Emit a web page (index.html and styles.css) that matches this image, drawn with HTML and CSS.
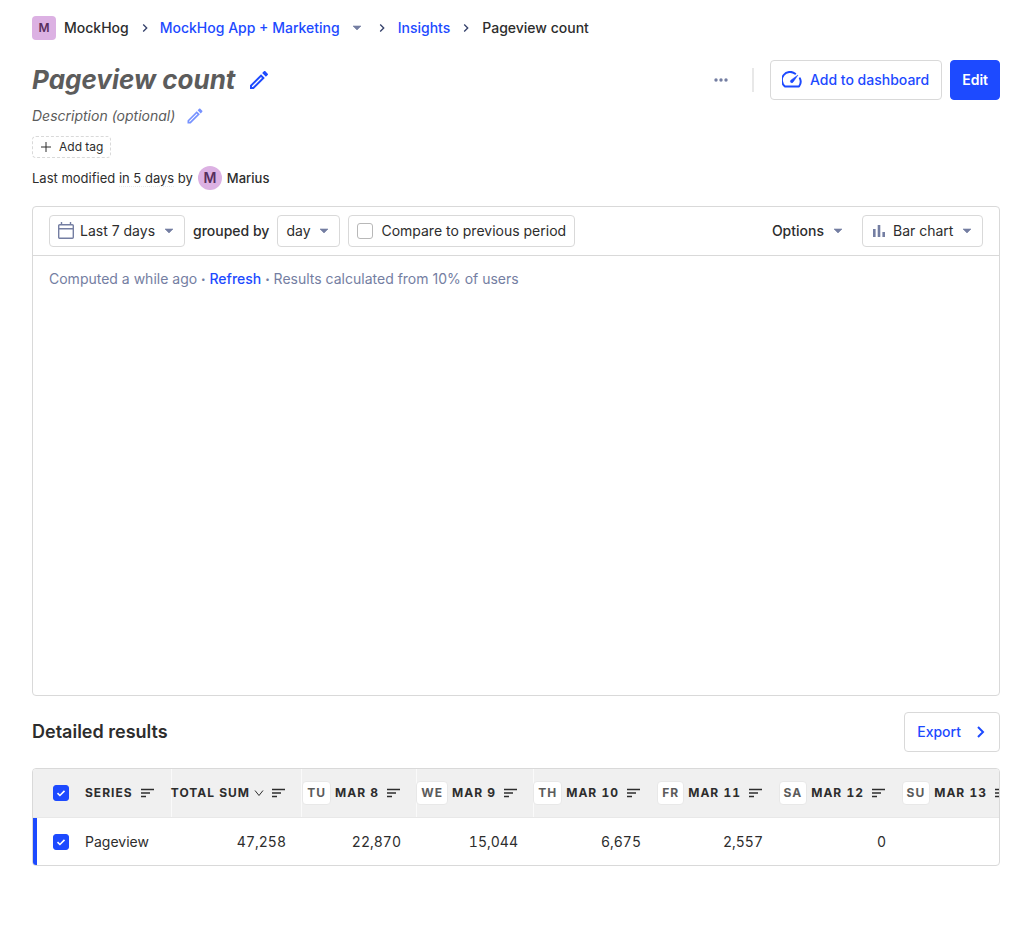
FILE: index.html
```html
<!DOCTYPE html>
<html lang="en">
<head>
<meta charset="utf-8">
<meta name="viewport" content="width=device-width, initial-scale=1">
<title>Pageview count • MockHog</title>
<link rel="stylesheet" href="styles.css">
</head>
<body>
<svg class="sprite" aria-hidden="true">
  <symbol id="chevron" viewBox="0 0 24 24"><path d="M8.6 16.6 13.2 12 8.6 7.4 10 6l6 6-6 6z" fill="currentColor"/></symbol>
  <symbol id="caret" viewBox="0 0 10 6"><path d="M1 1h8L5 5z" fill="currentColor" stroke="currentColor" stroke-width=".6" stroke-linejoin="round"/></symbol>
  <symbol id="pencil" viewBox="0 0 24 24"><path fill="currentColor" d="M14.06 9.02l.92.92L5.92 19H5v-.92l9.06-9.06M17.66 3c-.25 0-.51.1-.7.29l-1.83 1.83 3.75 3.75 1.83-1.83c.39-.39.39-1.02 0-1.41l-2.34-2.34c-.2-.2-.45-.29-.71-.29zm-3.6 3.19L3 17.25V21h3.75L17.81 9.94l-3.75-3.75z"/></symbol>
  <symbol id="sort" viewBox="0 0 14 10"><path d="M0 1.5h13M0 5h9M0 8.5h5" stroke="currentColor" stroke-width="1.3"/></symbol>
</svg>

<main class="page">
  <nav class="breadcrumbs" aria-label="Breadcrumb">
    <span class="lettermark">M</span>
    <span class="crumb-org">MockHog</span>
    <svg class="crumb-sep"><use href="#chevron"/></svg>
    <a href="#project">MockHog App + Marketing</a>
    <button class="crumb-switch" aria-label="Switch project"><svg class="caret"><use href="#caret"/></svg></button>
    <svg class="crumb-sep"><use href="#chevron"/></svg>
    <a href="#insights">Insights</a>
    <svg class="crumb-sep"><use href="#chevron"/></svg>
    <span>Pageview count</span>
  </nav>

  <header class="page-header">
    <div class="title-row">
      <h1>Pageview count</h1>
      <button class="icon-button" aria-label="Edit name"><svg class="pencil-large"><use href="#pencil"/></svg></button>
    </div>
    <div class="actions">
      <button class="icon-button more" aria-label="More actions"><svg viewBox="0 0 14 4" fill="currentColor"><circle cx="2" cy="2" r="1.7"/><circle cx="7" cy="2" r="1.7"/><circle cx="12" cy="2" r="1.7"/></svg></button>
      <span class="divider"></span>
      <button class="button add-dashboard">
        <svg viewBox="0 0 20 18" fill="none" stroke="currentColor" stroke-width="2" stroke-linecap="round" stroke-linejoin="round"><path d="M13.2 2.7A8 8 0 0 0 3 15.5h14a8 8 0 0 0 .9-8.2"/><path d="M8.8 11.2a1.4 1.4 0 0 1 0-2L16 4l-5 7.2a1.5 1.5 0 0 1-2.2 0z" fill="currentColor" stroke-width=".5"/></svg>
        Add to dashboard
      </button>
      <button class="button primary">Edit</button>
    </div>
  </header>

  <div class="description">
    <span>Description (optional)</span>
    <button class="icon-button faded" aria-label="Edit description"><svg class="pencil-small"><use href="#pencil"/></svg></button>
  </div>
  <button class="add-tag"><svg viewBox="0 0 10 10" fill="none" stroke="currentColor"><path d="M5 0v10M0 5h10"/></svg>Add tag</button>
  <div class="modified">
    <span>Last modified <span class="time">in 5 days</span> by</span>
    <span class="lettermark round">M</span>
    <span class="author">Marius</span>
  </div>

  <section class="insight">
    <div class="toolbar">
      <div class="filters">
        <label class="picker date">
          <svg class="lead calendar" viewBox="0 0 16 17" fill="none" stroke="currentColor" stroke-width="1.4"><path d="M1.7 2.7h12.6a1 1 0 0 1 1 1v11.6a1 1 0 0 1-1 1H1.7a1 1 0 0 1-1-1V3.700a1 1 0 0 1 1-1zM.7 6.700h14.6M3.500 0v3M12.500 0v3"/></svg>
          <select aria-label="Date range"><option>Last 7 days</option></select>
          <svg class="caret"><use href="#caret"/></svg>
        </label>
        <label class="filter-label" for="interval">grouped by</label>
        <span class="picker">
          <select id="interval"><option>day</option></select>
          <svg class="caret"><use href="#caret"/></svg>
        </span>
        <label class="compare"><input type="checkbox" class="box">Compare to previous period</label>
      </div>
      <div class="display">
        <button class="options" aria-haspopup="menu">Options<svg class="caret"><use href="#caret"/></svg></button>
        <label class="picker chart">
          <svg class="lead bars" viewBox="0 0 12 12" fill="currentColor"><path d="M0 4h2.6v8H0zM4.7 0h2.6v12H4.7zM9.4 7H12v5H9.4z"/></svg>
          <select aria-label="Chart type"><option>Bar chart</option></select>
          <svg class="caret"><use href="#caret"/></svg>
        </label>
      </div>
    </div>
    <div class="canvas">
      <p class="status">Computed a while ago <span class="dot">•</span> <a href="#refresh">Refresh</a> <span class="dot">•</span> Results calculated from 10% of users</p>
    </div>
  </section>

  <div class="results-header">
    <h2>Detailed results</h2>
    <button class="button export">Export<svg viewBox="0 0 8 12" fill="none" stroke="currentColor" stroke-width="2"><path d="M1 1l5 5-5 5"/></svg></button>
  </div>

  <div class="results">
    <table>
      <colgroup><col class="c-series"><col class="c-total"><col class="c-tu"><col class="c-we"><col class="c-th"><col class="c-fr"><col class="c-sa"><col class="c-su"></colgroup>
      <thead>
        <tr>
          <th scope="col"><div class="cell start"><input type="checkbox" class="box" checked aria-label="Select all series"><span>Series</span><svg class="sort"><use href="#sort"/></svg></div></th>
          <th scope="col"><div class="cell"><span>Total sum</span><svg class="down" viewBox="0 0 10 7" fill="none" stroke="currentColor"><path d="M1 .5l4 5 4-5"/></svg><svg class="sort"><use href="#sort"/></svg></div></th>
          <th scope="col"><div class="cell"><span class="weekday">Tu</span><span>Mar 8</span><svg class="sort"><use href="#sort"/></svg></div></th>
          <th scope="col"><div class="cell"><span class="weekday">We</span><span>Mar 9</span><svg class="sort"><use href="#sort"/></svg></div></th>
          <th scope="col"><div class="cell"><span class="weekday">Th</span><span>Mar 10</span><svg class="sort"><use href="#sort"/></svg></div></th>
          <th scope="col"><div class="cell"><span class="weekday">Fr</span><span>Mar 11</span><svg class="sort"><use href="#sort"/></svg></div></th>
          <th scope="col"><div class="cell"><span class="weekday">Sa</span><span>Mar 12</span><svg class="sort"><use href="#sort"/></svg></div></th>
          <th scope="col"><div class="cell"><span class="weekday">Su</span><span>Mar 13</span><svg class="sort"><use href="#sort"/></svg></div></th>
        </tr>
      </thead>
      <tbody>
        <tr>
          <td class="series"><label class="cell start"><input type="checkbox" class="box" checked><span>Pageview</span></label></td>
          <td>47,258</td><td>22,870</td><td>15,044</td><td>6,675</td><td>2,557</td><td>0</td><td></td>
        </tr>
      </tbody>
    </table>
  </div>
</main>
</body>
</html>
```
FILE: styles.css
```css
:root {
  --blue: #1d4aff;
  --text: #2d2d2d;
  --muted: #747ea2;
  --border: #d9d9d9;
}

* { box-sizing: border-box; }

body {
  margin: 0;
  background: #fff;
  color: var(--text);
  font: 14px/20px Inter, "Liberation Sans", sans-serif;
}

button, select, input { font: inherit; color: inherit; margin: 0; }
button { border: 0; background: none; padding: 0; cursor: pointer; }
a { color: var(--blue); text-decoration: none; }
svg { display: block; flex: none; }
h1, h2, p { margin: 0; }

.sprite { position: absolute; width: 0; height: 0; }
.page { padding: 16px 32px 64px; }
.caret { width: 10px; height: 6px; color: var(--muted); }

.lettermark {
  display: flex;
  align-items: center;
  justify-content: center;
  width: 24px;
  height: 24px;
  border-radius: 4px;
  background: #dcb1e3;
  color: #572e5e;
  font-size: 12px;
  font-weight: 600;
}
.lettermark.round { border-radius: 50%; font-size: 14px; }

.breadcrumbs { display: flex; align-items: center; gap: 8px; font-weight: 500; }
.crumb-sep { width: 16px; height: 16px; color: #35416b; }
.crumb-switch { display: flex; padding: 0 4px; }
.crumb-org + .crumb-sep + a { margin-left: -1px; }

.page-header {
  display: flex;
  align-items: center;
  justify-content: space-between;
  margin-top: 20px;
}
.title-row { display: flex; align-items: center; gap: 12px; }
h1 {
  color: #5c5c5c;
  font-size: 26px;
  line-height: 40px;
  font-weight: 700;
  font-style: italic;
}
.icon-button { display: flex; color: var(--blue); }
.icon-button.faded { opacity: 0.6; }
.pencil-large { width: 24px; height: 24px; }
.pencil-small { width: 20px; height: 20px; }

.actions { display: flex; align-items: center; gap: 8px; }
.more { color: var(--muted); padding: 8px; }
.more svg { width: 14px; height: 4px; }
.divider { width: 2px; height: 24px; margin: 0 8px; background: #e8e8e8; }

.button {
  display: flex;
  align-items: center;
  height: 40px;
  padding: 0 12px;
  border: 1px solid var(--border);
  border-radius: 4px;
  background: #fff;
  color: var(--blue);
  font-weight: 500;
}
.button.primary { padding: 0 11px; border-color: var(--blue); background: var(--blue); color: #fff; font-weight: 600; }
.add-dashboard { gap: 8px; padding-left: 11px; }
.add-dashboard svg { width: 20px; height: 18px; }

.description {
  display: flex;
  align-items: center;
  gap: 10px;
  height: 24px;
  margin-top: 4px;
  color: #5c5c5c;
  font-style: italic;
}
.add-tag {
  display: flex;
  align-items: center;
  gap: 8px;
  height: 22px;
  margin-top: 8px;
  padding: 0 7px 0 8px;
  border: 1px dashed var(--border);
  border-radius: 4px;
  font-size: 12px;
}
.add-tag svg { width: 10px; height: 10px; }
.modified {
  display: flex;
  align-items: center;
  gap: 5px;
  margin-top: 8px;
  font-size: 13px;
}
.time { border-bottom: 1px dotted #e8e8e8; }
.author { font-weight: 500; }

.insight {
  margin-top: 16px;
  border: 1px solid var(--border);
  border-radius: 4px;
}
.toolbar {
  display: flex;
  justify-content: space-between;
  padding: 8px 16px;
  border-bottom: 1px solid var(--border);
}
.filters, .display { display: flex; align-items: center; gap: 8px; }
.filter-label { font-weight: 500; }

.picker { position: relative; display: flex; }
.picker select {
  appearance: none;
  height: 32px;
  padding: 0 28px 0 8px;
  border: 1px solid var(--border);
  border-radius: 4px;
  background: #fff;
}
.picker .caret { position: absolute; right: 11px; top: 13px; pointer-events: none; }
.lead { position: absolute; left: 9px; color: var(--muted); pointer-events: none; }
.calendar { top: 7px; width: 16px; height: 17px; }
.bars { top: 10px; width: 12px; height: 12px; left: 11px; }
.picker.date select, .picker.chart select { padding-left: 30px; }

.compare {
  display: flex;
  align-items: center;
  gap: 8px;
  height: 32px;
  padding: 0 8px;
  border: 1px solid var(--border);
  border-radius: 4px;
}
.box {
  appearance: none;
  flex: none;
  width: 16px;
  height: 16px;
  border: 1px solid #b8b8b8;
  border-radius: 3px;
  background: #fff;
}
.box:checked {
  border-color: var(--blue);
  background: var(--blue) url("data:image/svg+xml,%3Csvg xmlns='http://www.w3.org/2000/svg' viewBox='0 0 14 14'%3E%3Cpath d='M3.5 7.2l2.4 2.3 4.6-4.6' fill='none' stroke='white' stroke-width='1.6'/%3E%3C/svg%3E") center / 14px no-repeat;
}

.options { display: flex; align-items: center; gap: 9px; margin-right: 11px; font-weight: 500; }

.canvas { min-height: 439px; padding: 13px 16px; }
.status { color: var(--muted); }
.status a { font-weight: 500; }
.dot { font-size: 8px; vertical-align: 2px; }

.results-header {
  display: flex;
  align-items: center;
  justify-content: space-between;
  margin: 16px 0;
}
h2 { font-size: 18px; line-height: 24px; font-weight: 600; }
.export { gap: 16px; }
.export svg { width: 8px; height: 12px; margin-right: 2px; }

.results {
  overflow-x: auto;
  scrollbar-width: none;
  border: 1px solid var(--border);
  border-radius: 4px;
}
table {
  table-layout: fixed;
  width: 992px;
  min-width: 100%;
  border-collapse: separate;
  border-spacing: 0;
  font-variant-numeric: tabular-nums;
}
.c-series { width: 139px; }
.c-total { width: 130px; }
.c-tu { width: 115px; }
.c-we { width: 117px; }
.c-th { width: 123px; }
.c-fr { width: 122px; }
.c-sa { width: 123px; }
.c-su { width: 123px; }

th {
  height: 49px;
  padding: 0 16px 0 0;
  border-bottom: 1px solid #e8e8e8;
  background: #f0f0f0;
  font-size: 12px;
  font-weight: 700;
  letter-spacing: 1px;
  text-transform: uppercase;
  white-space: nowrap;
}
th:nth-child(-n+4) { box-shadow: inset -1px 0 #fafafa; }
.cell { display: flex; align-items: center; justify-content: flex-end; gap: 4px; }
.cell.start { justify-content: flex-start; padding-left: 20px; gap: 16px; }
.sort { width: 14px; height: 10px; margin-left: 4px; }
.start .sort { margin-left: -8px; }
.down { width: 10px; height: 7px; }
.weekday {
  padding: 1px 4px;
  border: 1px solid #e8e8e8;
  border-radius: 4px;
  background: #fff;
  color: #5c5c5c;
  line-height: 20px;
}
td { height: 47px; padding: 0 16px 0 0; text-align: right; }
.series { border-left: 4px solid var(--blue); }
.series .start { padding-left: 16px; }
```
